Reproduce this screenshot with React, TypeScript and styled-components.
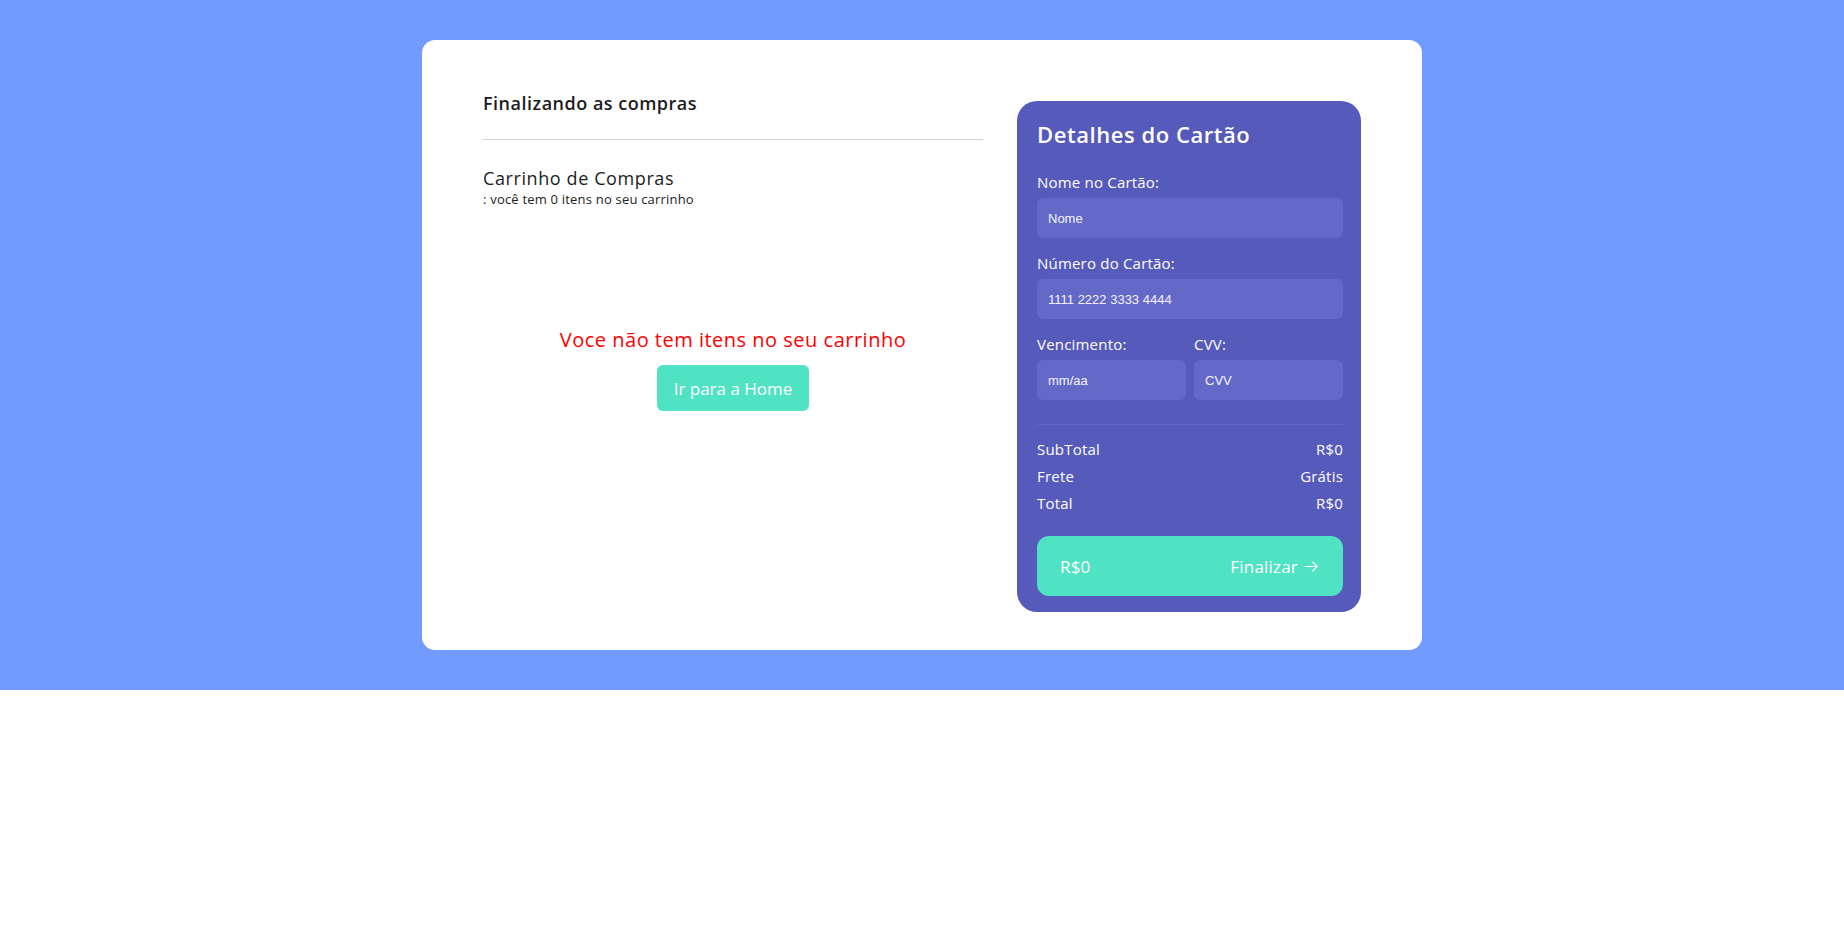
import React from "react";
import styled, { createGlobalStyle } from "styled-components";

const Global = createGlobalStyle`
  * { box-sizing: border-box; }
  html, body { margin: 0; padding: 0; background: #ffffff; }
  body { font-family: "Open Sans", "Liberation Sans", sans-serif; }
`;

const Section = styled.section`
  background: #729bff;
  padding: 40px 0 40px;
`;

const Card = styled.div`
  width: 1000px;
  margin: 0 auto;
  background: #ffffff;
  border-radius: 13px;
  padding: 51px 61px 38px 61px;
  display: flex;
  gap: 34px;
  align-items: flex-start;
`;

const LeftCol = styled.div`
  flex: 1;
  display: flex;
  flex-direction: column;
`;

const PageTitle = styled.h3`
  margin: 0;
  font-size: 18px;
  font-weight: 600;
  color: #1c1c1c;
  line-height: 24px;
  letter-spacing: 0.5px;
`;

const Divider = styled.hr`
  border: none;
  height: 1px;
  background: #d2d2d2;
  margin: 24px 0 26px;
`;

const CartTitle = styled.h4`
  margin: 0;
  font-size: 18px;
  font-weight: 400;
  color: #1c1c1c;
  line-height: 24px;
  letter-spacing: 0.6px;
`;

const CartSub = styled.p`
  margin: 0;
  font-size: 13px;
  color: #222;
  line-height: 18px;
  letter-spacing: 0.2px;
`;

const Empty = styled.div`
  margin-top: 118px;
  display: flex;
  flex-direction: column;
  align-items: center;
  gap: 11px;
`;

const EmptyText = styled.p`
  margin: 0;
  color: #ff0000;
  font-size: 20px;
  font-weight: 500;
  line-height: 28px;
  letter-spacing: 0.5px;
`;

const HomeButton = styled.button`
  width: 152px;
  height: 46px;
  border: none;
  border-radius: 6px;
  background: #4fe2c3;
  color: #ffffff;
  font-family: inherit;
  font-size: 17px;
  font-weight: 500;
  cursor: pointer;
`;

const Panel = styled.div`
  width: 344px;
  margin-top: 10px;
  background: #565abb;
  border-radius: 20px;
  padding: 17px 18px 16px 20px;
  color: #ffffff;
  display: flex;
  flex-direction: column;
`;

const PanelTitle = styled.h2`
  margin: 0 0 22px;
  font-size: 22px;
  font-weight: 600;
  line-height: 32px;
  letter-spacing: 0.55px;
`;

const Field = styled.div`
  display: flex;
  flex-direction: column;
  gap: 6px;
  margin-bottom: 15px;
`;

const Label = styled.label`
  font-size: 15px;
  font-weight: 500;
  line-height: 20px;
  letter-spacing: 0.2px;
`;

const Input = styled.input`
  height: 40px;
  width: 100%;
  border: none;
  border-radius: 6px;
  background: #6468c6;
  color: #ffffff;
  padding: 0 11px;
  font-family: "Liberation Sans", Arial, sans-serif;
  font-size: 13px;
  outline: none;
  &::placeholder { color: #f4f4ff; }
`;

const Row = styled.div`
  display: grid;
  grid-template-columns: 1fr 1fr;
  gap: 8px;
`;

const PanelLine = styled.hr`
  border: none;
  height: 1px;
  background: #6064c4;
  margin: 9px 0 14px;
`;

const Summary = styled.div`
  display: flex;
  flex-direction: column;
  gap: 6px;
  margin-bottom: 22px;
`;

const SumRow = styled.div`
  display: flex;
  justify-content: space-between;
  font-size: 15px;
  font-weight: 500;
  line-height: 21px;
  letter-spacing: 0.2px;
`;

const Checkout = styled.button`
  height: 60px;
  width: 100%;
  border: none;
  border-radius: 12px;
  background: #4fe2c3;
  color: #ffffff;
  display: flex;
  align-items: center;
  justify-content: space-between;
  padding: 0 25px 0 23px;
  font-family: inherit;
  font-size: 17px;
  font-weight: 500;
  letter-spacing: 0.2px;
  cursor: pointer;
`;

const CheckoutLabel = styled.span`
  display: flex;
  align-items: center;
  gap: 6px;
`;

const Arrow = () => (
  <svg width="14" height="11" viewBox="0 0 14 11" fill="none" stroke="#ffffff" strokeWidth="1.1" strokeLinecap="round" strokeLinejoin="round">
    <path d="M0.8 5.5h12.4M8.5 1 13.2 5.5 8.5 10" />
  </svg>
);

export default function App() {
  return (
    <>
      <Global />
      <Section>
        <Card>
          <LeftCol>
            <PageTitle>Finalizando as compras</PageTitle>
            <Divider />
            <CartTitle>Carrinho de Compras</CartTitle>
            <CartSub>: você tem 0 itens no seu carrinho</CartSub>
            <Empty>
              <EmptyText>Voce não tem itens no seu carrinho</EmptyText>
              <HomeButton>Ir para a Home</HomeButton>
            </Empty>
          </LeftCol>
          <Panel>
            <PanelTitle>Detalhes do Cartão</PanelTitle>
            <Field>
              <Label>Nome no Cartão:</Label>
              <Input placeholder="Nome" />
            </Field>
            <Field>
              <Label>Número do Cartão:</Label>
              <Input placeholder="1111 2222 3333 4444" />
            </Field>
            <Row>
              <Field>
                <Label>Vencimento:</Label>
                <Input placeholder="mm/aa" />
              </Field>
              <Field>
                <Label>CVV:</Label>
                <Input placeholder="CVV" />
              </Field>
            </Row>
            <PanelLine />
            <Summary>
              <SumRow><span>SubTotal</span><span>R$0</span></SumRow>
              <SumRow><span>Frete</span><span>Grátis</span></SumRow>
              <SumRow><span>Total</span><span>R$0</span></SumRow>
            </Summary>
            <Checkout>
              <span>R$0</span>
              <CheckoutLabel>Finalizar<Arrow /></CheckoutLabel>
            </Checkout>
          </Panel>
        </Card>
      </Section>
    </>
  );
}
